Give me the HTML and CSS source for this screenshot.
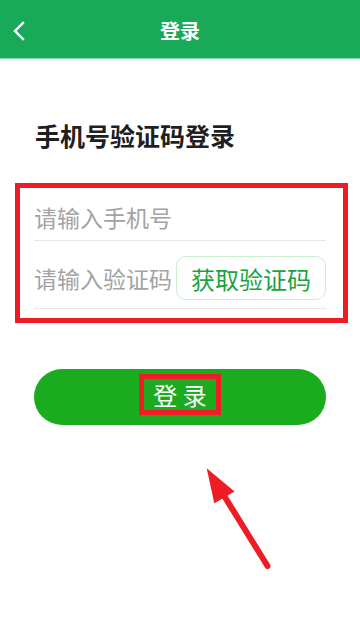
FILE: index.html
```html
<!DOCTYPE html>
<html lang="zh-CN">
<head>
<meta charset="utf-8">
<title>登录</title>
<link rel="stylesheet" href="styles.css">
</head>
<body>
<div class="page">
  <header class="topbar">
    <svg class="back" width="14" height="20" viewBox="0 0 14 20"><polyline points="10,2 2,10 10,18" fill="none" stroke="#fff" stroke-width="2.4" stroke-linecap="square"/></svg>
    <div class="topbar-title">登录</div>
  </header>
  <main class="content">
    <h1 class="heading">手机号验证码登录</h1>
    <div class="form-box">
      <div class="row row-phone">
        <input class="field" type="text" placeholder="请输入手机号">
      </div>
      <div class="row row-code">
        <input class="field field-code" type="text" placeholder="请输入验证码">
        <button class="code-btn" type="button">获取验证码</button>
      </div>
    </div>
    <button class="login-btn" type="button"><span class="login-label">登 录</span></button>
  </main>
  <svg class="arrow" width="80" height="120" viewBox="195 460 80 120">
    <polygon points="206.7,468.3 234.5,491.5 214.3,503.3" fill="#ee1c25"/>
    <line x1="223" y1="494" x2="267.5" y2="566" stroke="#ee1c25" stroke-width="6" stroke-linecap="round"/>
  </svg>
</div>
</body>
</html>
```
FILE: styles.css
```css
* { box-sizing: border-box; }
html, body { margin: 0; padding: 0; background: #fff; }
body {
  font-family: "Noto Sans CJK SC", "Noto Sans", sans-serif;
  width: 360px;
  height: 619px;
  overflow: hidden;
}
.page { position: relative; width: 360px; height: 619px; }
.topbar {
  height: 59px;
  background: #19aa59;
  border-bottom: 1px solid #84dba6;
  display: flex;
  align-items: center;
  justify-content: center;
  position: relative;
}
.back { position: absolute; left: 13px; top: 21px; }
.topbar-title {
  color: #fff;
  font-size: 20px;
  font-weight: bold;
  line-height: 28px;
  padding-top: 4px;
}
.content { display: flex; flex-direction: column; }
.heading {
  margin: 59px 0 0 35px;
  font-size: 25px;
  line-height: 35px;
  font-weight: bold;
  color: #1f1f1f;
}
.form-box {
  margin: 30px 0 0 15px;
  width: 333px;
  border: 5px solid #ee1c25;
  padding: 0 17px 9px 14px;
}
.row {
  display: flex;
  align-items: center;
  justify-content: space-between;
  border-bottom: 1px solid #e8e8e8;
}
.row-phone { padding: 14px 0 8px; }
.row-code { padding: 15px 0 8px; }
.field {
  border: none;
  outline: none;
  padding: 0;
  margin: 0;
  font-family: "Noto Sans CJK SC", sans-serif;
  font-size: 23px;
  line-height: 30px;
  height: 30px;
  color: #333;
  background: transparent;
  width: 100%;
}
.field-code { width: 140px; }
.field::placeholder { color: #a3a3a3; }
.code-btn {
  width: 150px;
  height: 44px;
  border: 1px solid #c9efcc;
  border-radius: 10px;
  background: #fff;
  color: #1aa33f;
  font-family: "Noto Sans CJK SC", sans-serif;
  font-size: 24px;
  padding: 0;
  flex: none;
}
.login-btn {
  margin: 46px 0 0 34px;
  width: 292px;
  height: 56px;
  border: none;
  border-radius: 28px;
  background: #1aab1e;
  display: flex;
  align-items: center;
  justify-content: center;
  padding: 0 0 5px;
  font-family: "Noto Sans CJK SC", sans-serif;
}
.login-label {
  border: 5px solid #ee1c25;
  color: #fff;
  font-size: 24px;
  line-height: 31px;
  padding: 0 9px;
  white-space: pre;
}
.arrow { position: absolute; left: 195px; top: 460px; }
```
